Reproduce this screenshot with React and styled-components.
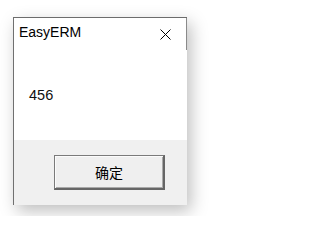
import React from 'react';
import styled, { createGlobalStyle } from 'styled-components';

const GlobalStyle = createGlobalStyle`
  html, body {
    margin: 0;
    padding: 0;
    background: #ffffff;
  }
  body {
    font-family: "Liberation Sans", Arial, sans-serif;
  }
`;

const Page = styled.div`
  width: 225px;
  height: 216px;
  padding: 17px 0 0 13px;
  box-sizing: border-box;
`;

const Window = styled.div`
  width: 174px;
  height: 188px;
  box-sizing: border-box;
  display: flex;
  flex-direction: column;
  background: #ffffff;
  border-top: 1px solid #6c6c6c;
  border-left: 1px solid #707070;
  box-shadow: 4px 6px 16px rgba(0, 0, 0, 0.26);
`;

const TitleBar = styled.div`
  height: 32px;
  box-sizing: border-box;
  display: flex;
  justify-content: space-between;
  align-items: flex-start;
  padding: 4px 15px 0 5px;
  border-right: 1px solid #8a8a8a;
`;

const Title = styled.span`
  font-size: 14px;
  line-height: 20px;
  color: #000000;
`;

const CloseButton = styled.svg`
  width: 11px;
  height: 11px;
  margin-top: 7px;
  display: block;
`;

const Body = styled.div`
  flex: 1;
  padding: 35px 0 0 15px;
  font-size: 14.5px;
  line-height: 20px;
  color: #101010;
`;

const Footer = styled.div`
  height: 65px;
  box-sizing: border-box;
  background: #f0f0f0;
  display: flex;
  justify-content: flex-end;
  align-items: center;
  padding-right: 22px;
`;

const Button = styled.button`
  width: 111px;
  height: 35px;
  box-sizing: border-box;
  margin: 0;
  padding: 0;
  background: #efefef;
  border: 1px solid #7a7a7a;
  border-right: 2px solid #666666;
  border-bottom: 2px solid #666666;
  box-shadow: inset 1px 1px 0 #fbfbfb, inset -1px -1px 0 #a9a9a9;
  font-family: "Noto Sans CJK SC", "Liberation Sans", sans-serif;
  font-size: 14px;
  line-height: 20px;
  color: #000000;
`;

const App = () => (
  <>
    <GlobalStyle />
    <Page>
      <Window>
        <TitleBar>
          <Title>EasyERM</Title>
          <CloseButton viewBox="0 0 11 11">
            <path d="M0.5 0.5 L10.5 10.5 M10.5 0.5 L0.5 10.5" stroke="#000" strokeWidth="1" fill="none" />
          </CloseButton>
        </TitleBar>
        <Body>456</Body>
        <Footer>
          <Button type="button">确定</Button>
        </Footer>
      </Window>
    </Page>
  </>
);

export default App;
